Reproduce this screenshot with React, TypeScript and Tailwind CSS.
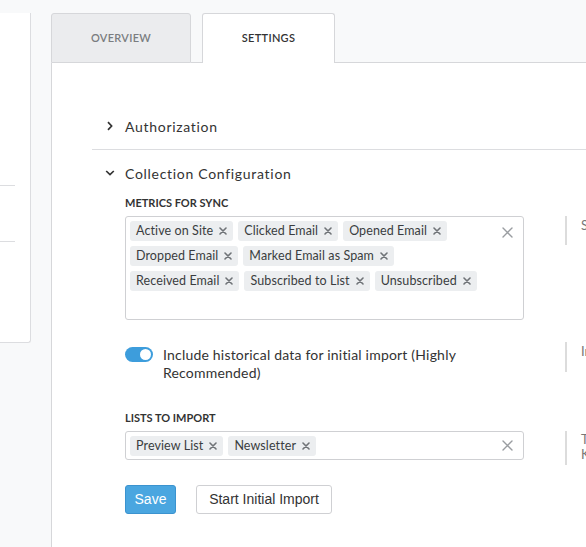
import React from "react";

const lato = { fontFamily: "Lato, 'Open Sans', sans-serif" } as const;

function TagX() {
  return (
    <svg width="8" height="8" viewBox="0 0 8 8" className="shrink-0">
      <path d="M1 1L7 7M7 1L1 7" stroke="#6f7377" strokeWidth="1.6" strokeLinecap="round" />
    </svg>
  );
}

function ClearX() {
  return (
    <svg width="11" height="11" viewBox="0 0 11 11" className="shrink-0">
      <path d="M1 1L10 10M10 1L1 10" stroke="#9a9da1" strokeWidth="1.4" strokeLinecap="round" />
    </svg>
  );
}

function Tag({ label }: { label: string }) {
  return (
    <span className="flex h-[20px] items-center gap-[6px] rounded-[3px] bg-[#eceef0] pl-[6px] pr-[6px] text-[12.5px] tracking-[0.1px] text-[#3a3d40]">
      <span className="pt-[1px]">{label}</span>
      <TagX />
    </span>
  );
}

function Help({ lines, h }: { lines: string[]; h: string }) {
  return (
    <div className={`ml-[41px] flex ${h} w-[40px] shrink-0 flex-col border-l-2 border-[#dcdcdc] pl-[14px] text-[13px] leading-[15px] text-[#777] whitespace-nowrap`}>
      {lines.map((l) => (
        <span key={l}>{l}</span>
      ))}
    </div>
  );
}

const metrics = [
  "Active on Site",
  "Clicked Email",
  "Opened Email",
  "Dropped Email",
  "Marked Email as Spam",
  "Received Email",
  "Subscribed to List",
  "Unsubscribed",
];

export default function App() {
  return (
    <div className="flex h-[547px] w-[586px] overflow-hidden bg-[#f8f9fa]" style={lato}>
      {/* left navigation card */}
      <div className="w-[31px] shrink-0 pt-[13px]">
        <div className="h-[330px] rounded-br-[3px] border-r border-b border-[#dcdde0] bg-white">
          <div className="h-[172px]" />
          <div className="mr-[15px] border-t border-[#dcdde0]" />
          <div className="h-[55px]" />
          <div className="mr-[15px] border-t border-[#dcdde0]" />
        </div>
      </div>

      <div className="ml-[20px] flex min-w-0 flex-1 flex-col">
        {/* tabs */}
        <div className="flex h-[63px] shrink-0 items-end pt-[13px]">
          <div className="flex h-[50px] w-[140px] items-center justify-center rounded-t-[3px] border border-[#d6d7da] bg-[#ebecee] text-[11px] font-semibold tracking-[0.3px] text-[#7a7d80]">
            OVERVIEW
          </div>
          <div className="h-[50px] w-[11px] border-b border-[#d6d7da]" />
          <div className="flex h-[50px] w-[133px] items-center justify-center rounded-t-[3px] border border-b-0 border-[#d6d7da] bg-white text-[11px] font-semibold tracking-[0.3px] text-[#333]">
            SETTINGS
          </div>
          <div className="h-[50px] flex-1 border-b border-[#d6d7da]" />
        </div>

        {/* settings panel */}
        <div className="flex-1 border-l border-[#d6d7da] bg-white pl-[40px] pt-[40px]">
          <div className="flex h-[47px] items-center border-b border-[#dcdde0] pl-[15px] text-[14px] tracking-[0.7px] text-[#333]">
            <svg width="6" height="10" viewBox="0 0 6 10" className="mr-[12px]">
              <path d="M1 1.2L4.6 5L1 8.8" fill="none" stroke="#333" strokeWidth="1.7" />
            </svg>
            Authorization
          </div>

          <div className="flex h-[46px] items-center pl-[13px] text-[14px] tracking-[0.7px] text-[#333]">
            <svg width="10" height="6" viewBox="0 0 10 6" className="mr-[10px]">
              <path d="M1.2 1L5 4.6L8.8 1" fill="none" stroke="#333" strokeWidth="1.7" />
            </svg>
            Collection Configuration
          </div>

          <div className="pl-[33px]">
            <div className="mb-[6px] text-[11px] font-bold leading-[14px] text-[#333]">METRICS FOR SYNC</div>
            <div className="flex items-start">
              <div className="relative h-[104px] w-[399px] shrink-0 rounded-[3px] border border-[#cfd0d3] pl-[4px] pr-[30px] pt-[4px]">
                <div className="flex flex-wrap gap-x-[5px] gap-y-[5px]">
                  {metrics.map((m) => (
                    <Tag key={m} label={m} />
                  ))}
                </div>
                <div className="absolute right-[10px] top-[10px]">
                  <ClearX />
                </div>
              </div>
              <Help lines={["Select the metrics"]} h="h-[29px] pt-[2px]" />
            </div>

            <div className="mt-[22px] flex items-start">
              <div className="flex w-[399px] shrink-0 items-start gap-[10px] pt-[4px]">
                <div className="mt-[1px] flex h-[15px] w-[28px] shrink-0 items-center justify-end rounded-full bg-[#3d9ddc] pr-[2px]">
                  <div className="h-[11px] w-[11px] rounded-full bg-white" />
                </div>
                <div className="text-[14px] leading-[18px] tracking-[0.2px] text-[#333]">
                  Include historical data for initial import (Highly Recommended)
                </div>
              </div>
              <Help lines={["Import history"]} h="h-[30px] pt-[2px]" />
            </div>

            <div className="mb-[6px] mt-[29px] text-[11px] font-bold leading-[14px] text-[#333]">LISTS TO IMPORT</div>
            <div className="flex items-start">
              <div className="relative flex h-[29px] w-[399px] shrink-0 items-center gap-[5px] rounded-[3px] border border-[#cfd0d3] pl-[4px]">
                <Tag label="Preview List" />
                <Tag label="Newsletter" />
                <div className="absolute right-[10px] top-[8px]">
                  <ClearX />
                </div>
              </div>
              <Help lines={["The lists to import", "Klaviyo lists"]} h="h-[34px] pt-[1px]" />
            </div>

            <div className="mt-[20px] flex gap-[20px]" style={{ fontFamily: "'Liberation Sans', Arial, sans-serif" }}>
              <button className="h-[29px] w-[51px] rounded-[3px] border border-[#3b93cf] bg-[#4aa6e0] text-[14px] text-white">
                Save
              </button>
              <button className="h-[29px] w-[136px] rounded-[3px] border border-[#cfd0d3] bg-white text-[14px] text-[#333]">
                Start Initial Import
              </button>
            </div>
          </div>
        </div>
      </div>
    </div>
  );
}
